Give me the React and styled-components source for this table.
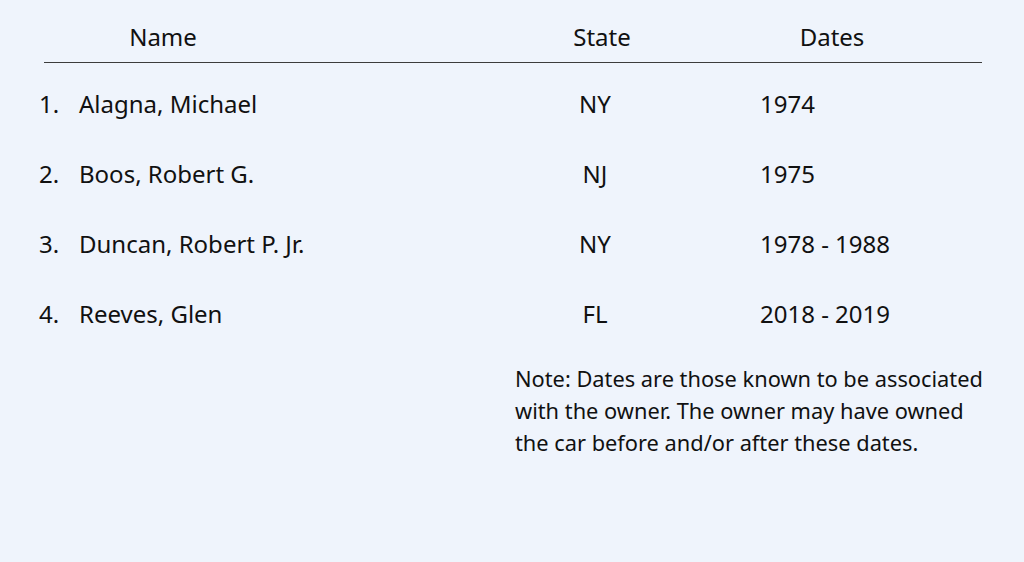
import styled, { createGlobalStyle } from "styled-components";

const GlobalStyle = createGlobalStyle`
  html, body {
    margin: 0;
    padding: 0;
    background: #eff4fc;
  }
  body {
    font-family: "Noto Sans", "Open Sans", sans-serif;
    color: #111;
  }
`;

const Page = styled.div`
  width: 1024px;
  height: 562px;
  padding: 20px 0 0 39px;
  box-sizing: border-box;
`;

const HeadRow = styled.div`
  display: grid;
  grid-template-columns: 238px 240px 160px 300px;
  width: 938px;
  margin-left: 5px;
  padding-bottom: 9px;
  border-bottom: 1px solid #3c3c3c;
  margin-bottom: 5px;
`;

const HeadCell = styled.div`
  font-size: 24px;
  line-height: 33px;
  text-align: center;
`;

const Row = styled.div`
  display: grid;
  grid-template-columns: 40px 436px 160px 1fr;
  height: 70px;
  align-items: center;
  font-size: 24px;
`;

const Cell = styled.div`
  text-align: ${(p) => p.$align || "left"};
  padding-left: ${(p) => p.$indent || 0}px;
  white-space: nowrap;
`;

const Note = styled.p`
  margin: 15px 0 0 476px;
  width: 476px;
  font-size: 21.8px;
  line-height: 32px;
`;

const owners = [
  { name: "Alagna, Michael", state: "NY", dates: "1974" },
  { name: "Boos, Robert G.", state: "NJ", dates: "1975" },
  { name: "Duncan, Robert P. Jr.", state: "NY", dates: "1978 - 1988" },
  { name: "Reeves, Glen", state: "FL", dates: "2018 - 2019" },
];

const App = () => {
  return (
    <>
      <GlobalStyle />
      <Page>
        <HeadRow>
          <HeadCell>Name</HeadCell>
          <div />
          <HeadCell>State</HeadCell>
          <HeadCell>Dates</HeadCell>
        </HeadRow>
        {owners.map((o, i) => (
          <Row key={o.name}>
            <Cell>{i + 1}.</Cell>
            <Cell>{o.name}</Cell>
            <Cell $align="center">{o.state}</Cell>
            <Cell $indent={85}>{o.dates}</Cell>
          </Row>
        ))}
        <Note>
          Note: Dates are those known to be associated with the owner. The owner
          may have owned the car before and/or after these dates.
        </Note>
      </Page>
    </>
  );
};

export default App;
